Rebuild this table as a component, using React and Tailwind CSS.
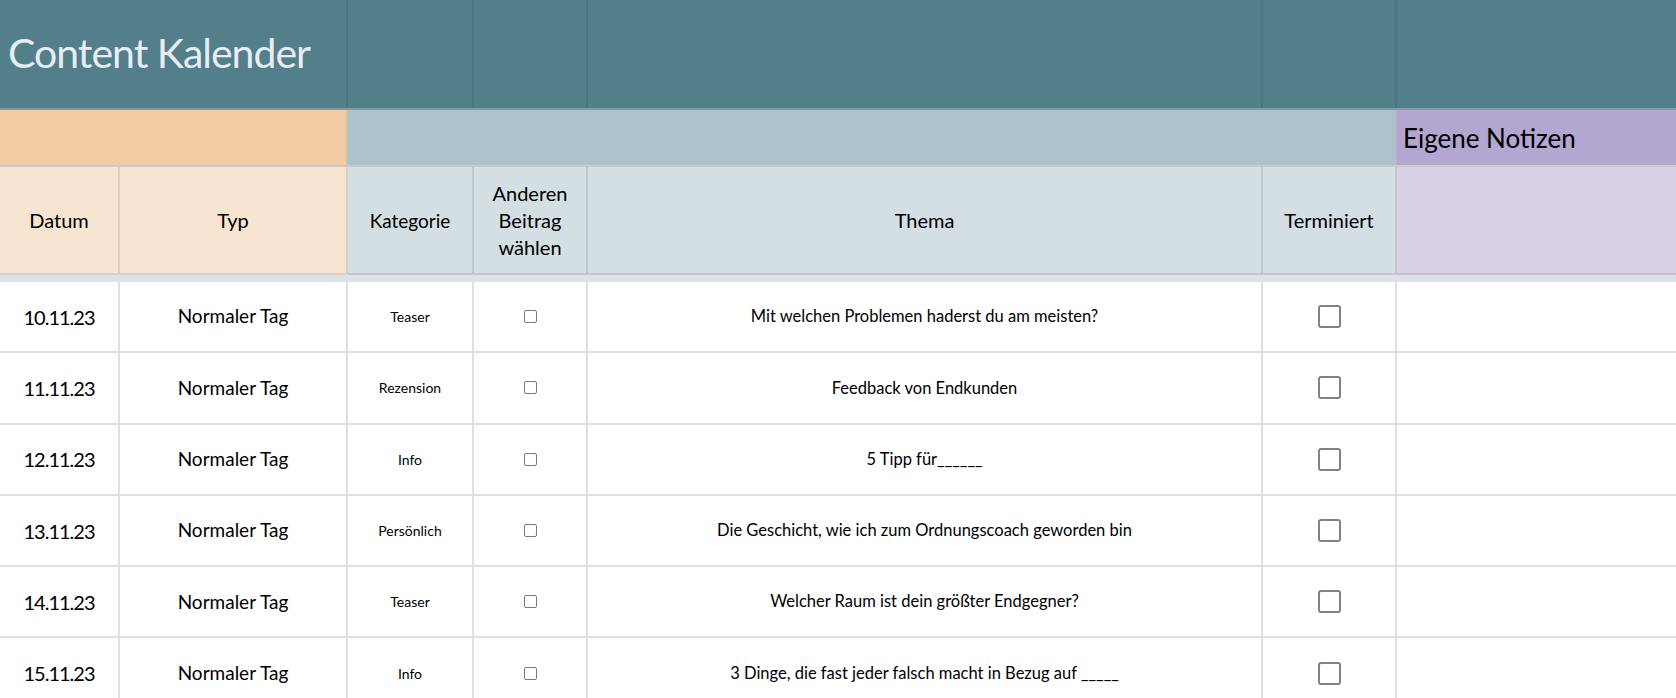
import React from "react";

const rows = [
  { date: "10.11.23", kat: "Teaser", thema: "Mit welchen Problemen haderst du am meisten?" },
  { date: "11.11.23", kat: "Rezension", thema: "Feedback von Endkunden" },
  { date: "12.11.23", kat: "Info", thema: "5 Tipp für______" },
  { date: "13.11.23", kat: "Persönlich", thema: "Die Geschicht, wie ich zum Ordnungscoach geworden bin" },
  { date: "14.11.23", kat: "Teaser", thema: "Welcher Raum ist dein größter Endgegner?" },
  { date: "15.11.23", kat: "Info", thema: "3 Dinge, die fast jeder falsch macht in Bezug auf _____" },
];

const cols = "grid grid-cols-[120px_228px_126px_114px_675px_134px_1fr]";

export default function App() {
  return (
    <div className="w-[1676px] h-[698px] overflow-hidden bg-white text-black font-['Lato',sans-serif]">
      {/* title band */}
      <div className={`${cols} h-[110px] bg-[#537f8b] border-b-2 border-[#7e9aa2]`}>
        <div className="col-span-2 border-r-2 border-[#4b7580] flex items-center pl-[8px] pb-[4px]">
          <span className="text-[41px] tracking-[-1px] text-[#e8ecf4] leading-none whitespace-nowrap">Content Kalender</span>
        </div>
        <div className="border-r-2 border-[#4b7580]" />
        <div className="border-r-2 border-[#4b7580]" />
        <div className="border-r-2 border-[#4b7580]" />
        <div className="border-r-2 border-[#4b7580]" />
        <div />
      </div>

      {/* section band */}
      <div className={`${cols} h-[57px] border-b-2 border-[#c9c9c9]`}>
        <div className="col-span-2 bg-[#f2cba2] border-r-2 border-[#d9bfa2]" />
        <div className="col-span-4 bg-[#aac4c9] border-r-2 border-[#b9b3cc]" />
        <div className="bg-[#b3a6d0] flex items-center pl-[6px]">
          <span className="text-[26px] leading-none">Eigene Notizen</span>
        </div>
      </div>

      {/* column headers */}
      <div className={`${cols} h-[108px] text-[20px] leading-[27px] text-center`}>
        <div className="bg-[#f7e4d1] border-r-2 border-b-2 border-[#dccfbf] flex items-center justify-center">Datum</div>
        <div className="bg-[#f7e4d1] border-r-2 border-b-2 border-[#dccfbf] flex items-center justify-center">Typ</div>
        <div className="bg-[#d3dfe3] border-r-2 border-b-2 border-[#bfc9cc] flex items-center justify-center text-[19px]">Kategorie</div>
        <div className="bg-[#d3dfe3] border-r-2 border-b-2 border-[#bfc9cc] flex items-center justify-center">
          Anderen<br />Beitrag<br />wählen
        </div>
        <div className="bg-[#d3dfe3] border-r-2 border-b-2 border-[#bfc9cc] flex items-center justify-center">Thema</div>
        <div className="bg-[#d3dfe3] border-r-2 border-b-2 border-[#bfc9cc] flex items-center justify-center">Terminiert</div>
        <div className="bg-[#d8d1e6] border-b-2 border-[#c6bfd4]" />
      </div>

      <div className="h-[7px] bg-[#dde1ea]" />

      {rows.map((r) => (
        <div key={r.date} className={`${cols} h-[71.3px] text-center`}>
          <div className="border-r-2 border-b-2 border-[#e0e0e0] flex items-center justify-center text-[20px] tracking-[-1px]">{r.date}</div>
          <div className="border-r-2 border-b-2 border-[#e0e0e0] flex items-center justify-center text-[19px]">Normaler Tag</div>
          <div className="border-r-2 border-b-2 border-[#e0e0e0] flex items-center justify-center text-[14px]">{r.kat}</div>
          <div className="border-r-2 border-b-2 border-[#e0e0e0] flex items-center justify-center">
            <span className="w-[13px] h-[13px] rounded-[2px] border-[1.5px] border-[#7a7a7a]" />
          </div>
          <div className="border-r-2 border-b-2 border-[#e0e0e0] flex items-center justify-center text-[16.5px]">{r.thema}</div>
          <div className="border-r-2 border-b-2 border-[#e0e0e0] flex items-center justify-center">
            <span className="w-[23px] h-[23px] rounded-[3px] border-[2.5px] border-[#828282]" />
          </div>
          <div className="border-b-2 border-[#e0e0e0]" />
        </div>
      ))}
    </div>
  );
}
